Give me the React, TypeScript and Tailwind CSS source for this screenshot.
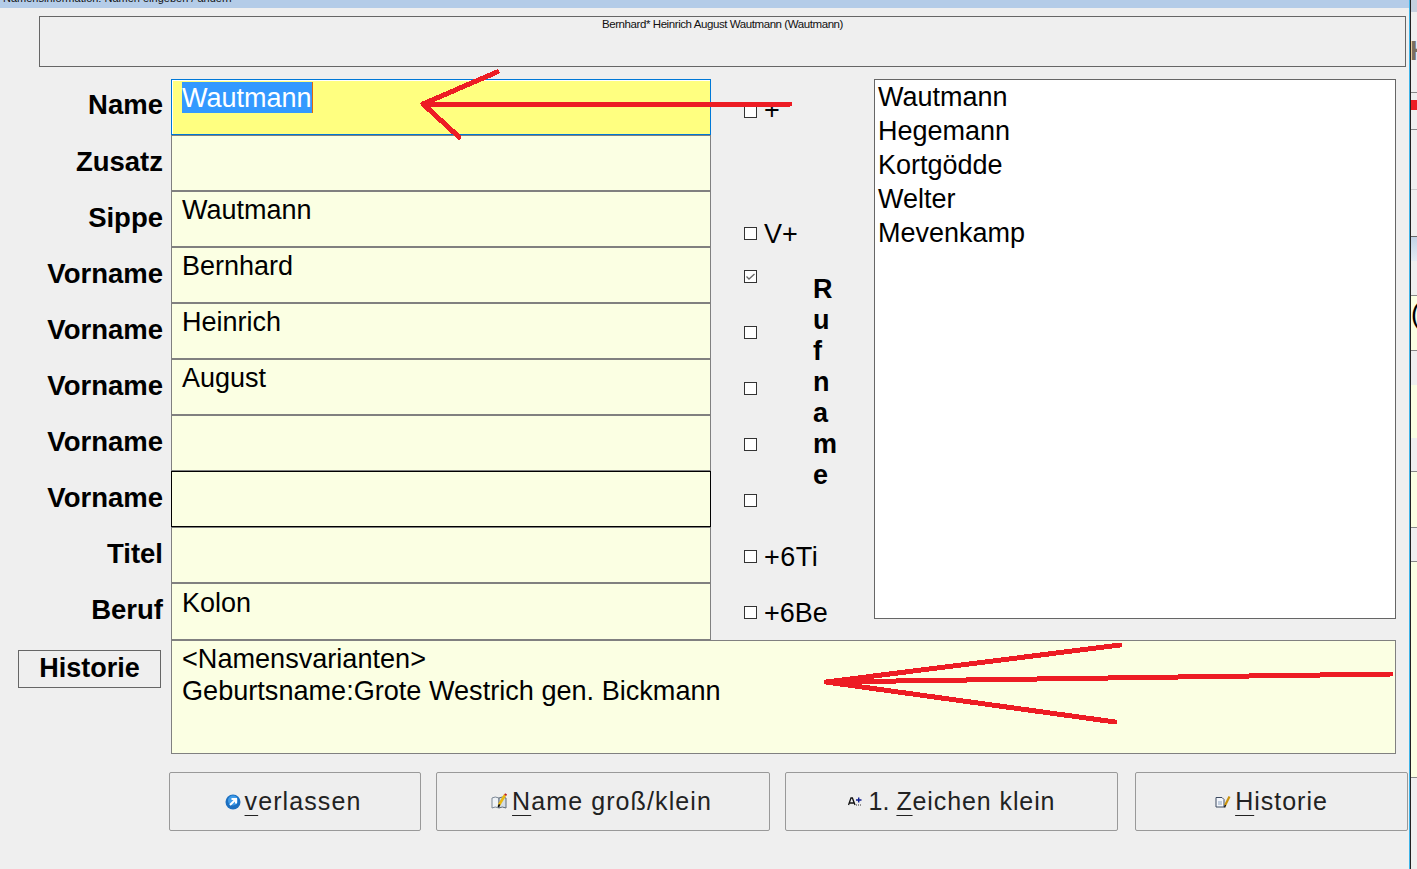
import React from "react";

const rows = [
  { label: "Name", value: "", pad: "pt-[10px]" },
  { label: "Zusatz", value: "", pad: "pt-[11px]" },
  { label: "Sippe", value: "Wautmann", pad: "pt-[11px]" },
  { label: "Vorname", value: "Bernhard", pad: "pt-[11px]" },
  { label: "Vorname", value: "Heinrich", pad: "pt-[11px]" },
  { label: "Vorname", value: "August", pad: "pt-[11px]" },
  { label: "Vorname", value: "", pad: "pt-[11px]" },
  { label: "Vorname", value: "", pad: "pt-[11px]" },
  { label: "Titel", value: "", pad: "pt-[11px]" },
  { label: "Beruf", value: "Kolon", pad: "pt-[11px]" },
];

const checks = [
  { text: "+", pad: "pt-[8px]", show: true, textPad: "-mt-[1px]" },
  { text: "", pad: "", show: false },
  { text: "V+", pad: "pt-[28px]", show: true, textPad: "pt-[2px]" },
  { text: "", pad: "pt-[2px]", show: true, checked: true },
  { text: "", pad: "pt-[2px]", show: true },
  { text: "", pad: "pt-[2px]", show: true },
  { text: "", pad: "pt-[2px]", show: true },
  { text: "", pad: "pt-[2px]", show: true },
  { text: "+6Ti", pad: "pt-[2px]", show: true, textPad: "pt-[2px] tracking-[0.5px]" },
  { text: "+6Be", pad: "pt-[2px]", show: true, textPad: "pt-[2px]" },
];

const surnames = ["Wautmann", "Hegemann", "Kortgödde", "Welter", "Mevenkamp"];

function Checkbox({ checked }: { checked?: boolean }) {
  return (
    <span className="w-[13px] h-[13px] shrink-0 border border-[#333] bg-white flex items-center justify-center">
      {checked && (
        <svg width="11" height="11" viewBox="0 0 11 11" fill="none">
          <path d="M1.5 5.5 L4 8 L9.5 3" stroke="#666" strokeWidth="1.3" />
        </svg>
      )}
    </span>
  );
}

function ExitIcon() {
  return (
    <svg width="16" height="16" viewBox="0 0 16 16">
      <circle cx="8" cy="8" r="7.5" fill="#1c6fc0" />
      <circle cx="8" cy="6.5" r="5" fill="#3f9be8" />
      <path d="M5 11 L10 6 M6.5 5 H11 V9.5" stroke="#fff" strokeWidth="2" fill="none" />
    </svg>
  );
}

function BookIcon() {
  return (
    <svg width="17" height="17" viewBox="0 0 17 17">
      <path d="M1 5 Q4 3 8 5 V15 Q4 13 1 15 Z" fill="#eef2f6" stroke="#7c8794" />
      <path d="M8 5 Q11 3 15 5 V15 Q11 13 8 15 Z" fill="#d4dde6" stroke="#5d6874" />
      <path d="M8 12 L14 2" stroke="#e8b810" strokeWidth="2.6" />
      <path d="M13.6 1 L15.6 2.2" stroke="#c02020" strokeWidth="1.8" />
      <path d="M7.2 14 L8.6 11.4" stroke="#111" strokeWidth="1.6" />
    </svg>
  );
}

function LetterIcon() {
  return (
    <svg width="14" height="9" viewBox="0 0 14 9">
      <path d="M0.5 8 L3 1 H4.4 L7 8 M1.6 6 H6" stroke="#111" strokeWidth="1.3" fill="none" />
      <path d="M8 3 H13.5 M10.7 0.5 V5.5" stroke="#101f90" strokeWidth="1.4" />
      <path d="M8 8 H13.5" stroke="#333" strokeWidth="1.2" strokeDasharray="1 1" />
    </svg>
  );
}

function NoteIcon() {
  return (
    <svg width="16" height="13" viewBox="0 0 16 13">
      <path d="M1 2.5 H7 L9 4.5 V12 H1 Z" fill="#f4f7fc" stroke="#3c4a60" />
      <path d="M3 7 H7 M3 9 H7" stroke="#8ea4c0" />
      <path d="M10 10.5 L14.5 1.5" stroke="#c9920c" strokeWidth="2.2" />
      <path d="M9.5 12.5 L10.5 10" stroke="#111" strokeWidth="1.4" />
    </svg>
  );
}

function ActionButton({
  icon,
  first,
  rest,
  prefix,
  className,
}: {
  icon: React.ReactNode;
  first: string;
  rest: string;
  prefix?: string;
  className: string;
}) {
  return (
    <button
      className={`h-[59px] flex items-center justify-center gap-[4px] rounded-[2px] border border-[#999] bg-[#eeeeee] text-[25px] text-[#222] ${className}`}
    >
      {icon}
      <span>
        {prefix && <span className="ml-[3px] tracking-[0px]">{prefix}</span>}
        <span className="underline underline-offset-[5px] decoration-1">{first}</span>
        {rest}
      </span>
    </button>
  );
}

// neighbouring window, only a thin slice of it is on screen
function NextWindow() {
  return (
    <div className="w-[6px] h-full overflow-hidden flex flex-col bg-[#efefef]">
      <div className="h-[12px] bg-[#c5d0df]" />
      <div className="h-[81px] pt-[24px] text-[27px] leading-[31px] font-bold text-[#7a6f60] border-b border-[#888] -indent-[1px]">
        H
      </div>
      <div className="h-[7px]" />
      <div className="h-[10px] bg-[#ed1c24]" />
      <div className="h-[20px] border-b border-[#888]" />
      <div className="h-[60px] border-b border-[#ccc]" />
      <div className="h-[47px] border-b border-[#666]" />
      <div className="h-[24px] bg-gradient-to-b from-[#c3d3e6] to-[#e4ebf3]" />
      <div className="h-[35px] border-b border-[#888]" />
      <div className="h-[55px] bg-[#fbffe3] border-b border-[#888] pt-[3px] text-[27px] leading-[31px] text-black">
        (
      </div>
      <div className="h-[34px]" />
      <div className="h-[53px] bg-[#fbffe3]" />
      <div className="h-[34px] border-b border-[#888]" />
      <div className="h-[56px] bg-[#fbffe3] border-b border-[#888]" />
      <div className="h-[34px] border-b border-[#888]" />
      <div className="h-[216px] bg-[#fbffe3] border-b border-[#888]" />
    </div>
  );
}

export default function App() {
  return (
    <div className="relative w-[1417px] h-[869px] overflow-hidden flex bg-[#efefef] text-black font-['Liberation_Sans',Arial,sans-serif]">
      <div className="w-[1409px] flex flex-col">
        {/* title bar, mostly scrolled off */}
        <div className="h-[8px] overflow-hidden bg-[#b4cce8]">
          <div className="-mt-[10px] pl-[3px] text-[11px] leading-[16px] text-[#111]">
            Namensinformation: Namen eingeben / ändern
          </div>
        </div>

        <div className="mt-[8px] ml-[39px] w-[1367px] h-[51px] border border-[#666] text-center text-[11.5px] leading-[14px] tracking-[-0.42px] text-[#111]">
          Bernhard* Heinrich August Wautmann (Wautmann)
        </div>

        <div className="mt-[12px] grid grid-cols-[171px_540px_102px_61px_522px] grid-rows-[repeat(9,56px)_57px_114px]">
          {rows.map((row, i) => (
            <React.Fragment key={i}>
              <div
                style={{ gridRow: i + 1, gridColumn: 1 }}
                className={`pr-[8px] text-right text-[27.5px] leading-[32px] font-bold ${row.pad}`}
              >
                {row.label}
              </div>
              <div
                style={{ gridRow: i + 1, gridColumn: 2 }}
                className={`pl-[10px] text-[27px] leading-[31px] ${
                  i === 0
                    ? "border border-[#0078d7] bg-[#ffff80] pt-[2px] shadow-[inset_1px_1px_0_#fff]"
                    : i === 7
                      ? "border border-black bg-[#fbffe3] pt-[3px]"
                      : i === 9
                        ? "border border-[#808080] bg-[#fbffe3] pt-[4px]"
                        : "border border-[#808080] bg-[#fbffe3] pt-[3px]"
                }`}
              >
                {i === 0 ? (
                  <span className="relative inline-block h-[31px] bg-[#3399ff] text-white border-r border-[#e06a10]">
                    <span className="relative top-[1px]">Wautmann</span>
                  </span>
                ) : (
                  row.value
                )}
              </div>
              {checks[i].show && (
                <div
                  style={{ gridRow: i + 1, gridColumn: 3 }}
                  className={`flex items-center gap-[7px] pl-[33px] text-[27px] leading-[31px] ${checks[i].pad}`}
                >
                  <Checkbox checked={checks[i].checked} />
                  {checks[i].text && <span className={checks[i].textPad}>{checks[i].text}</span>}
                </div>
              )}
            </React.Fragment>
          ))}

          <div className="col-start-4 row-start-4 row-span-6 pt-[27px] flex flex-col text-[27px] leading-[31px] font-bold">
            {"Rufname".split("").map((ch, i) => (
              <span key={i}>{ch}</span>
            ))}
          </div>

          <div className="col-start-5 row-start-1 row-span-10 self-start h-[540px] border border-[#666] bg-white pl-[3px] text-[27px] leading-[34px]">
            {surnames.map((name) => (
              <div key={name}>{name}</div>
            ))}
          </div>

          <div className="col-start-1 row-start-11 pt-[10px] pl-[18px]">
            <div className="w-[143px] h-[38px] border border-[#666] flex items-center justify-center pb-[2px] text-[27px] font-bold">
              Historie
            </div>
          </div>
          <div className="col-start-2 col-span-4 row-start-11 border border-[#808080] bg-[#fbffe3] pl-[10px] pt-[2px] text-[27.1px] leading-[32px]">
            <div>&lt;Namensvarianten&gt;</div>
            <div>Geburtsname:Grote Westrich gen. Bickmann</div>
          </div>
        </div>

        <div className="mt-[18px] ml-[169px] flex gap-[15px]">
          <ActionButton className="w-[252px] pr-[4px] tracking-[1.1px]" icon={<ExitIcon />} first="v" rest="erlassen" />
          <ActionButton className="w-[334px] pr-[3px] tracking-[1.1px]" icon={<BookIcon />} first="N" rest="ame groß/klein" />
          <ActionButton className="w-[333px] tracking-[0.9px]" icon={<LetterIcon />} prefix="1. " first="Z" rest="eichen klein" />
          <ActionButton className="w-[273px] ml-[2px] tracking-[1px]" icon={<NoteIcon />} first="H" rest="istorie" />
        </div>
      </div>

      <div className="w-[1px] bg-[#3fb4e8]" />
      <div className="w-[1px] bg-[#222]" />
      <NextWindow />

      {/* red arrows painted on top of the screenshot */}
      <svg className="absolute inset-0 pointer-events-none" width="1417" height="869" fill="none">
        <g stroke="#ed1c24" strokeLinecap="round" strokeLinejoin="round" shapeRendering="crispEdges">
          <path d="M497 72 L423 104 L459 137" strokeWidth="5" />
          <path d="M423 104 H790" strokeWidth="5" />
          <path d="M1120 645 L826 682 L1115 722" strokeWidth="5" />
          <path d="M826 682 L1391 674" strokeWidth="5" />
        </g>
      </svg>
    </div>
  );
}
